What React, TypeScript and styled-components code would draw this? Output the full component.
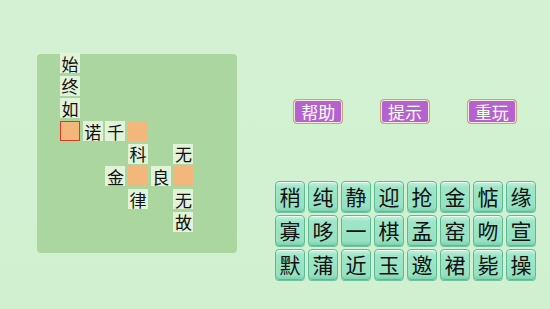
import React from 'react';
import styled, { createGlobalStyle } from 'styled-components';

const GlobalStyle = createGlobalStyle`
  html, body {
    margin: 0;
    padding: 0;
    background: #d2f1d1;
  }
  body {
    font-family: "Noto Sans CJK SC", "Noto Sans", sans-serif;
  }
`;

const Screen = styled.div`
  width: 550px;
  height: 309px;
  display: flex;
  align-items: flex-start;
  background: linear-gradient(180deg, #d4f2d3 0%, #d0f0d0 100%);
  overflow: hidden;
`;

const Board = styled.div`
  margin: 54px 0 0 37px;
  width: 200px;
  height: 199px;
  background: #acd6a0;
  border-radius: 4px;
  box-sizing: border-box;
  padding-left: 23px;
`;

const Grid = styled.div`
  margin-top: -1px;
  display: grid;
  grid-template-columns: repeat(6, 20px);
  grid-template-rows: repeat(8, 20px);
  column-gap: 2.7px;
  row-gap: 2.7px;
`;

const Cell = styled.div<{ $kind: 'text' | 'blank' | 'empty'; $selected?: boolean }>`
  width: 20px;
  height: 20px;
  box-sizing: border-box;
  display: flex;
  align-items: center;
  justify-content: center;
  font-size: 17px;
  line-height: 1;
  color: #111;
  background: ${(p) =>
    p.$kind === 'text' ? '#e2f3d9' : p.$kind === 'blank' ? '#f3b67b' : 'transparent'};
  border: ${(p) => (p.$selected ? '1.5px solid #d63b26' : 'none')};
`;

const Side = styled.div`
  margin: 99px 0 0 38px;
  width: 261px;
  display: flex;
  flex-direction: column;
`;

const Actions = styled.div`
  display: flex;
  justify-content: space-around;
  padding: 0 1px 0 0;
`;

const ActionButton = styled.button`
  width: 50px;
  height: 25px;
  padding: 0;
  box-sizing: border-box;
  border: 1px solid #c6a676;
  box-shadow: inset 0 0 0 1px #f4e8d8;
  border-radius: 4px;
  background: #b561d0;
  color: #ffffff;
  font-family: "Noto Sans CJK SC", sans-serif;
  font-size: 17px;
  line-height: 1;
  display: flex;
  align-items: center;
  justify-content: center;
`;

const Tiles = styled.div`
  margin-top: 57px;
  display: grid;
  grid-template-columns: repeat(8, 30px);
  grid-auto-rows: 31px;
  column-gap: 3px;
  row-gap: 3px;
`;

const Tile = styled.div`
  box-sizing: border-box;
  border: 1.5px solid #5db994;
  border-radius: 4px;
  background: linear-gradient(180deg, #c6f3df 0%, #9fe6c8 18%, #96e2c2 85%, #7fd3b0 100%);
  box-shadow: inset 0 1px 0 rgba(255, 255, 255, 0.7), 0 1px 0 #6cc39e;
  display: flex;
  align-items: center;
  justify-content: center;
  font-size: 21px;
  line-height: 1;
  color: #111;
`;

type CellData = { t?: string; blank?: boolean; sel?: boolean };

const layout: Record<string, CellData> = {
  '0,0': { t: '始' },
  '1,0': { t: '终' },
  '2,0': { t: '如' },
  '3,0': { blank: true, sel: true },
  '3,1': { t: '诺' },
  '3,2': { t: '千' },
  '3,3': { blank: true },
  '4,3': { t: '科' },
  '4,5': { t: '无' },
  '5,2': { t: '金' },
  '5,3': { blank: true },
  '5,4': { t: '良' },
  '5,5': { blank: true },
  '6,3': { t: '律' },
  '6,5': { t: '无' },
  '7,5': { t: '故' },
};

const pool = '稍纯静迎抢金惦缘寡哆一棋孟窑吻宣默蒲近玉邀裙毙操'.split('');

export default function App() {
  const cells = [];
  for (let r = 0; r < 8; r++) {
    for (let c = 0; c < 6; c++) {
      const d = layout[`${r},${c}`];
      const kind = !d ? 'empty' : d.blank ? 'blank' : 'text';
      cells.push(
        <Cell key={`${r}-${c}`} $kind={kind} $selected={d?.sel}>
          {d?.t}
        </Cell>
      );
    }
  }

  return (
    <>
      <GlobalStyle />
      <Screen>
        <Board>
          <Grid>{cells}</Grid>
        </Board>
        <Side>
          <Actions>
            <ActionButton>帮助</ActionButton>
            <ActionButton>提示</ActionButton>
            <ActionButton>重玩</ActionButton>
          </Actions>
          <Tiles>
            {pool.map((ch, i) => (
              <Tile key={i}>{ch}</Tile>
            ))}
          </Tiles>
        </Side>
      </Screen>
    </>
  );
}
